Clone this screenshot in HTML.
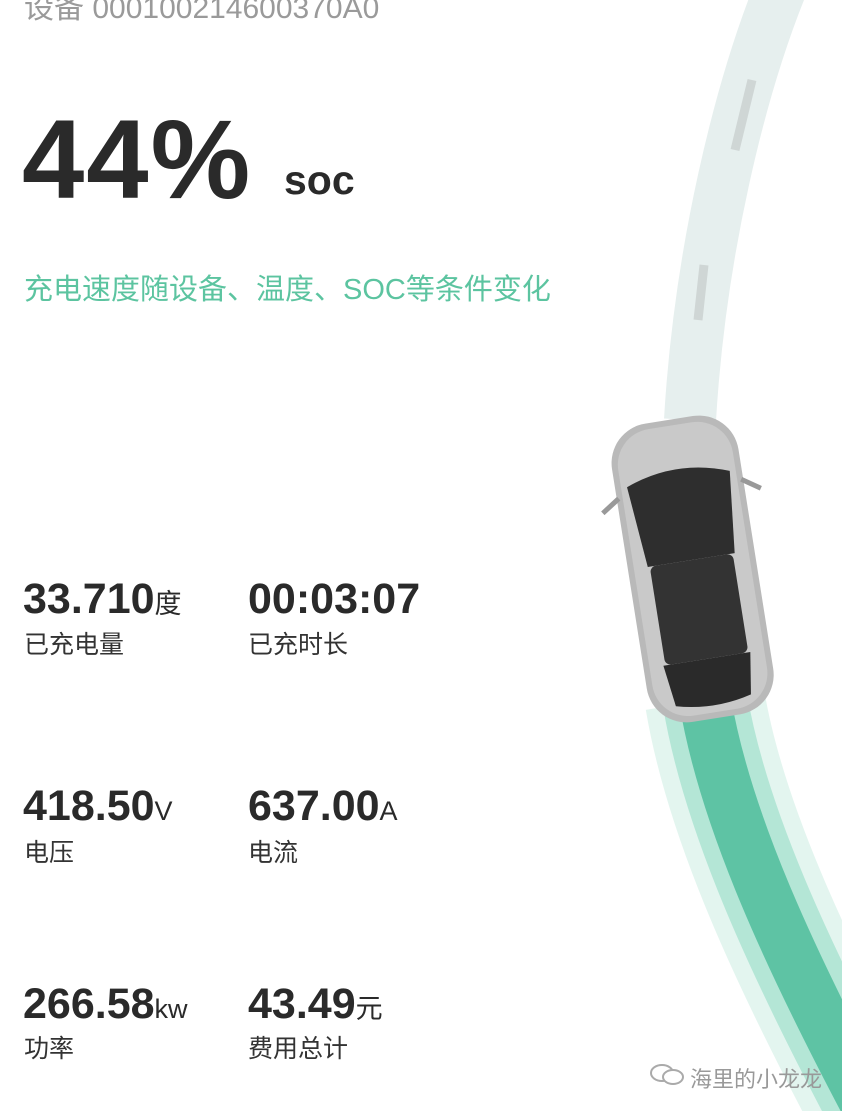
<!DOCTYPE html>
<html><head><meta charset="utf-8">
<style>
html,body{margin:0;padding:0;background:#fff;}
body{width:842px;height:1111px;position:relative;overflow:hidden;font-family:"Liberation Sans","Noto Sans CJK SC",sans-serif;}
.a{position:absolute;white-space:nowrap;}
.v{font-weight:bold;font-size:43px;color:#2a2a2a;line-height:1;}
.v small{font-weight:normal;font-size:27px;}
.l{font-size:25px;color:#333;line-height:1;}
</style></head><body>
<svg class="a" style="left:0;top:0" width="842" height="1111" viewBox="0 0 842 1111">
  <path d="M780 -10 C740 90 700 250 690 420" stroke="#e6efee" stroke-width="52" fill="none"/>
  <path d="M752 80 L735 150" stroke="#cfd6d5" stroke-width="9" fill="none"/>
  <path d="M704 265 L698 320" stroke="#cfd6d5" stroke-width="9" fill="none"/>
  <path d="M705 700 C725 820 790 960 870 1111" stroke="#e3f5ef" stroke-width="120" fill="none"/>
  <path d="M705 700 C725 820 790 960 870 1111" stroke="#b4e6d6" stroke-width="85" fill="none"/>
  <path d="M705 700 C725 820 790 960 870 1111" stroke="#5ec3a4" stroke-width="52" fill="none"/>
  <g transform="rotate(-9 692 565)">
    <rect x="628" y="418" width="128" height="302" rx="40" fill="#b9b9b9"/>
    <rect x="634" y="424" width="116" height="290" rx="36" fill="#c9c9c9"/>
    <path d="M640 478 Q692 458 744 478 L736 560 L648 560 Z" fill="#2e2e2e"/>
    <rect x="650" y="560" width="84" height="100" rx="6" fill="#333"/>
    <path d="M648 660 L736 660 L730 702 Q692 712 654 702 Z" fill="#2a2a2a"/>
    <path d="M612 500 L630 488 M772 500 L754 488" stroke="#999" stroke-width="5"/>
  </g>
</svg>
<div class="a" style="left:24px;top:-17px;font-size:30px;color:#9a9a9a;">设备 000100214600370A0</div>
<div class="a" style="left:22px;top:104px;font-size:112px;font-weight:bold;color:#2a2a2a;line-height:1;letter-spacing:2px;">44%</div>
<div class="a" style="left:284px;top:160px;font-size:41px;font-weight:bold;color:#2a2a2a;line-height:1;">soc</div>
<div class="a" style="left:24px;top:276px;font-size:29px;color:#5cc4a0;line-height:1;">充电速度随设备、温度、SOC等条件变化</div>

<div class="a v" style="left:23px;top:578px;">33.710<small>度</small></div>
<div class="a l" style="left:24px;top:633px;">已充电量</div>
<div class="a v" style="left:248px;top:578px;">00:03:07</div>
<div class="a l" style="left:248px;top:633px;">已充时长</div>

<div class="a v" style="left:23px;top:785px;">418.50<small>V</small></div>
<div class="a l" style="left:24px;top:841px;">电压</div>
<div class="a v" style="left:248px;top:785px;">637.00<small>A</small></div>
<div class="a l" style="left:248px;top:841px;">电流</div>

<div class="a v" style="left:23px;top:983px;">266.58<small>kw</small></div>
<div class="a l" style="left:24px;top:1037px;">功率</div>
<div class="a v" style="left:248px;top:983px;">43.49<small>元</small></div>
<div class="a l" style="left:248px;top:1037px;">费用总计</div>

<svg class="a" style="left:648px;top:1062px" width="38" height="26" viewBox="0 0 38 26">
  <ellipse cx="14" cy="11" rx="11" ry="8" fill="none" stroke="#aaa" stroke-width="2"/>
  <ellipse cx="25" cy="15" rx="10" ry="7" fill="#fff" stroke="#aaa" stroke-width="2"/>
</svg>
<div class="a" style="left:690px;top:1062px;font-size:22px;color:#999;">海里的小龙龙</div>
</body></html>
